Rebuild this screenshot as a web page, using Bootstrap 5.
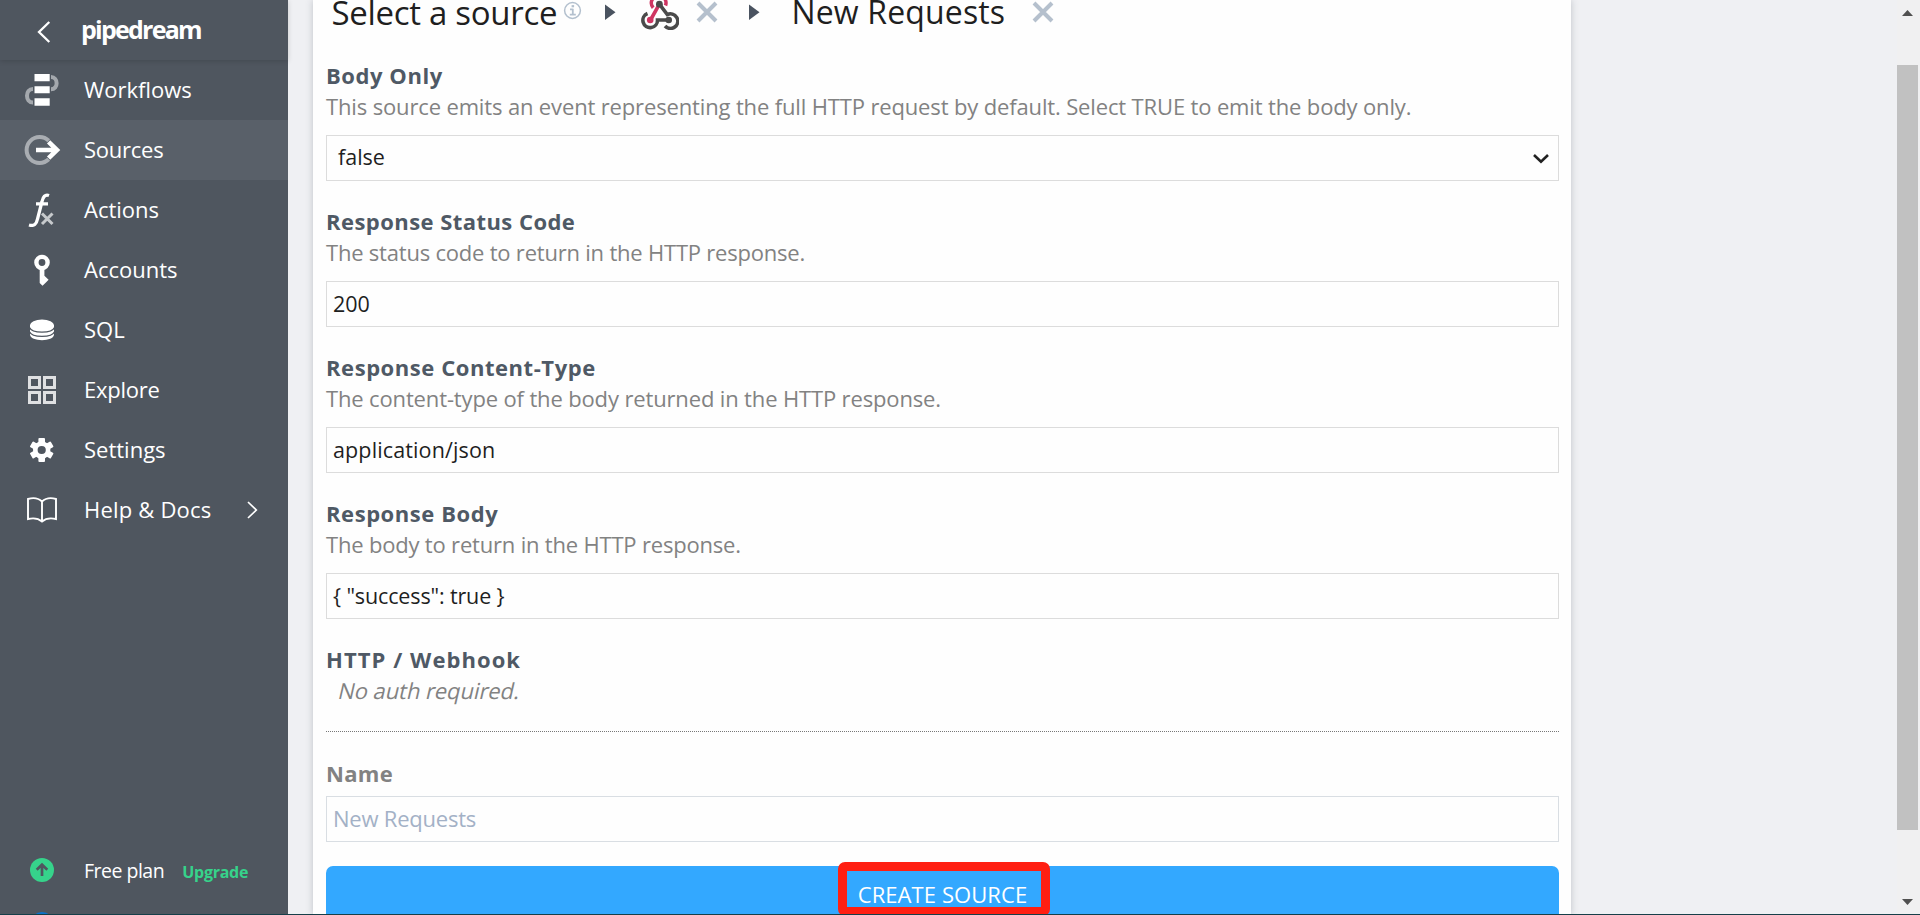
<!DOCTYPE html>
<html lang="en">
<head>
<meta charset="utf-8">
<title>Pipedream - Sources</title>
<link rel="stylesheet" href="https://cdn.jsdelivr.net/npm/bootstrap@5.3.0/dist/css/bootstrap.min.css">
<style>
body{font-family:"Open Sans","Noto Sans",sans-serif;font-size:22px;background:#eff0f3;height:915px;overflow:hidden;color:#212121}
.app{height:915px}
.side{width:288px;background:#4f565f;color:#fff}
.side-head{height:60px;box-shadow:0 1px 5px rgba(0,0,0,.16)}
.brand{font-size:25px;font-weight:700;letter-spacing:-1.75px;line-height:36px;margin-left:30px;margin-top:-2px}
.side .nav-link{height:60px;color:#fff;padding:0;line-height:30px}
.side .nav-link.active{background:#596069}
.ico{width:84px;padding-left:24px;flex:none}
.ico svg,.crumbs svg{display:block}
.nav-link span{margin-top:-2px}
.tight{letter-spacing:-.25px}
.plan{height:60px;font-size:19.5px;letter-spacing:-.5px;padding-top:2px}
.upg{font-size:16px;font-weight:700;letter-spacing:-.25px;color:#36d38b;margin-left:18px}
.panel{width:1258px;margin-left:25px;background:#fefefe;box-shadow:0 0 7px rgba(60,70,80,.27);padding:0 12px 0 13px}
.crumbs{height:60px;color:#1f1f1f}
.crumbs div{white-space:nowrap}
.t1{font-size:33px;line-height:26px;letter-spacing:-.3px;margin-left:5.5px;width:231px}
.t2{font-size:32px;line-height:23px;letter-spacing:.15px;margin-left:32px;width:240px}
.lab{font-weight:700;line-height:31px;letter-spacing:.56px;color:#4f5965}
.help{line-height:31px;letter-spacing:-.145px;color:#828282;white-space:nowrap}
.slant{display:inline-block;transform:skewX(-13deg);letter-spacing:-.08px;margin-left:13px}
.field{margin-bottom:25px}
.field .form-control,.field .form-select{margin-top:13px}
.form-control,.form-select{height:46px;border:1px solid #dcdcdc;border-radius:0;font-size:21.5px;padding:0 6px 1px;color:#1f1f1f;background-color:#fefefe}
.form-select{padding-left:11px;background-image:none}
.form-control::placeholder{color:#a3b1c6;opacity:1}
.dots{height:1px;margin-top:25px;background:repeating-linear-gradient(90deg,#777 0 1px,#fefefe 1px 2px)}
.action{margin-top:24px}
.create{display:block;height:49px;background:#33a8ff;border:0;border-radius:7px 7px 0 0;color:#fff;font-size:22px;line-height:30px;padding:6px 0 0;letter-spacing:.08px}
.create:hover{background:#33a8ff;color:#fff}
.ring{left:512px;top:-4px;width:212px;height:54px;border:9px solid #ff1f12;border-radius:7px}
.scroll{width:23px;background:#f0f0f1}
.thumb{width:21px;height:765px;background:#c1c1c1}
.edge{height:1px;background:#163f49}
</style>
<script src="https://cdn.jsdelivr.net/npm/bootstrap@5.3.0/dist/js/bootstrap.bundle.min.js"></script>
</head>
<body>
<div class="app d-flex position-relative overflow-hidden">
  <aside class="side d-flex flex-column flex-shrink-0">
    <div class="side-head d-flex align-items-center">
      <svg width="14" height="22" viewBox="0 0 14 22" style="margin-left:37px;margin-top:4px" fill="none" stroke="#fff" stroke-width="2.3"><path d="M12.3 1L2 11l10.300 10"/></svg>
      <div class="brand">pipedream</div>
    </div>
    <nav class="nav flex-column flex-nowrap">
      <a class="nav-link d-flex align-items-center"><div class="ico"><svg width="36" height="34" viewBox="0 0 36 34"><path d="M27 3c7.500 0 7.500 12.300 0 12.300M9 15c-8 0-8 13.500 0 13.500" transform="translate(0 1)" fill="none" stroke="#a4a8ad" stroke-width="4"/><path fill="#fff" d="M10.500 1h15.200v7.300H10.500zM10.500 13.200h15.200v7H10.500zM10.500 25.200h15.200v7.600H10.500z"/></svg></div><span>Workflows</span></a>
      <a class="nav-link active d-flex align-items-center"><div class="ico"><svg width="37" height="30" viewBox="0 0 37 30"><path d="M24.700 5.700A13 13 0 1 0 24.700 24.300" fill="none" stroke="#a9adb2" stroke-width="4"/><path d="M12 15h20M24.600 6.800l8.400 8.200l-8.400 8.200" fill="none" stroke="#fff" stroke-width="4.600"/></svg></div><span class="tight">Sources</span></a>
      <a class="nav-link d-flex align-items-center"><div class="ico"><svg width="34" height="34" viewBox="0 0 34 34" fill="none"><path d="M25 2.500c-4-1.500-6 1.500-7 6L13.500 26c-1 5-3.500 7.500-8.500 6M12 10.800h12" stroke="#fff" stroke-width="3.300"/><path d="M18 20.500l10.500 10.500M28.500 20.500L18 31" stroke="#c6c9cc" stroke-width="3"/></svg></div><span>Actions</span></a>
      <a class="nav-link d-flex align-items-center"><div class="ico"><svg width="36" height="32" viewBox="0 0 36 32"><circle cx="18" cy="8.500" r="5.600" fill="none" stroke="#fff" stroke-width="4.400"/><path fill="#fff" d="M15.700 14h4.700v7.800l4.200 4-3.200 3.200-2.900 2.700-2.800-2.700z"/></svg></div><span>Accounts</span></a>
      <a class="nav-link d-flex align-items-center"><div class="ico"><svg width="36" height="24" viewBox="0 0 36 24"><path fill="#fff" d="M6 7v9.500c0 7.500 24 7.500 24 0V7z"/><ellipse cx="18" cy="7.600" rx="12" ry="6.200" fill="#fff"/><path d="M5.500 9.500c2.500 6.200 22.500 6.200 25 0M5.500 13.800c2.500 6.200 22.500 6.200 25 0" fill="none" stroke="#4f565f" stroke-width="1.200"/></svg></div><span>SQL</span></a>
      <a class="nav-link d-flex align-items-center"><div class="ico"><svg width="36" height="28" viewBox="0 0 36 28"><g fill="none" stroke="#dfe0e2" stroke-width="3"><path d="M5.500 1.500h10v10h-10zM20.500 1.500h10v10h-10zM5.500 16.500h10v10h-10zM20.500 16.500h10v10h-10z"/></g></svg></div><span class="tight">Explore</span></a>
      <a class="nav-link d-flex align-items-center"><div class="ico"><svg width="36" height="24" viewBox="0 0 36 24"><g transform="translate(17.700 12)"><g fill="#fff"><rect id="tooth" x="-3.300" y="-12" width="6.600" height="24" rx="1"/><use href="#tooth" transform="rotate(60)"/><use href="#tooth" transform="rotate(120)"/></g><circle r="6.400" fill="none" stroke="#fff" stroke-width="4.600"/><circle r="4.100" fill="#4f565f"/></g></svg></div><span>Settings</span></a>
      <a class="nav-link d-flex align-items-center"><div class="ico"><svg width="36" height="26" viewBox="0 0 36 26" fill="none" stroke="#fff" stroke-width="1.900"><path d="M18 4.500C14 .800 9 .500 4 2v20c5-1.200 10-1 14 2.500c4-3.500 9-3.700 14-2.500V2C27 .500 22 .800 18 4.500v20"/></svg></div><span style="letter-spacing:.2px">Help &amp; Docs</span><svg width="11" height="18" viewBox="0 0 11 18" style="margin-left:36px" fill="none" stroke="#fff" stroke-width="1.700"><path d="M1 1l8.300 8L1 17"/></svg></a>
    </nav>
    <div class="plan d-flex align-items-center mt-auto">
      <div class="ico"><svg width="36" height="24" viewBox="0 0 36 24" style="margin-top:-2px"><circle cx="18" cy="12" r="12" fill="#36d38b"/><path d="M18 18V8M12.700 11.700L18 6.700l5.300 5" fill="none" stroke="#4f565f" stroke-width="2.700"/></svg></div>
      <div class="d-flex align-items-baseline"><span>Free plan</span><span class="upg">Upgrade</span></div>
    </div>
    <div class="ico overflow-hidden" style="height:15px;padding-top:11.500px"><svg width="36" height="24" viewBox="0 0 36 24"><circle cx="18" cy="12" r="12" fill="#0d73c9"/></svg></div>
  </aside>

  <main class="panel flex-shrink-0">
    <div class="crumbs d-flex align-items-start">
      <div class="t1">Select a source</div>
      <svg width="19" height="19" viewBox="0 0 19 19" style="margin-top:1px" fill="none" stroke="#b3c0ce"><circle cx="9.500" cy="9.500" r="7.900" stroke-width="1.500"/><path d="M9.800 7.700v6M7 8.300h2.800M6.800 13.700h6" stroke-width="1.800"/><path d="M8.600 5.200h2.500" stroke-width="2.200"/></svg>
      <svg width="11" height="17" viewBox="0 0 11 17" style="margin:4px 0 0 23px"><path fill="#4a5360" d="M0 .500L10.500 8.300 0 16z"/></svg>
      <svg width="38" height="32" viewBox="0 0 38 32" style="margin:-2px 0 0 25px" fill="none" stroke-width="3.600"><path d="M12.200 9.800A7.300 7.300 0 1 1 24.500 7.500M18.400 6.200L9.500 22" stroke="#cf3562"/><path d="M18.400 6.200L26.300 16.500A7.300 7.300 0 1 1 24 28M27.500 22H16.500A7.300 7.300 0 1 1 6.500 15.500" stroke="#4a4a4a"/><circle cx="18.400" cy="6.200" r="3.400" fill="#4a4a4a"/><circle cx="27.700" cy="22" r="3.300" fill="#4a4a4a"/><circle cx="9.200" cy="22" r="3.300" fill="#cf3562"/></svg>
      <svg width="22" height="22" viewBox="0 0 22 22" style="margin:1px 0 0 17px" stroke="#b5c0cd" stroke-width="4"><path d="M2 2l18 18M20 2L2 20"/></svg>
      <svg width="11" height="17" viewBox="0 0 11 17" style="margin:4px 0 0 31px"><path fill="#4a5360" d="M0 .500L10.500 8.300 0 16z"/></svg>
      <div class="t2">New Requests</div>
      <svg width="22" height="22" viewBox="0 0 22 22" style="margin:1px 0 0 0" stroke="#b5c0cd" stroke-width="4"><path d="M2 2l18 18M20 2L2 20"/></svg>
    </div>

    <div class="field">
      <div class="lab">Body Only</div>
      <div class="help">This source emits an event representing the full HTTP request by default. Select TRUE to emit the body only.</div>
      <div class="form-select d-flex align-items-center justify-content-between">false<svg width="16" height="10" viewBox="0 0 16 10" style="margin:2px 3px 0 0" fill="none" stroke="#212121" stroke-width="2.600"><path d="M1 1l7 6.700L15 1"/></svg></div>
    </div>
    <div class="field">
      <div class="lab" style="letter-spacing:.450px">Response Status Code</div>
      <div class="help" style="letter-spacing:-.210px">The status code to return in the HTTP response.</div>
      <input class="form-control" value="200">
    </div>
    <div class="field">
      <div class="lab">Response Content-Type</div>
      <div class="help">The content-type of the body returned in the HTTP response.</div>
      <input class="form-control" value="application/json" style="letter-spacing:.13px">
    </div>
    <div class="field">
      <div class="lab">Response Body</div>
      <div class="help" style="letter-spacing:-.190px">The body to return in the HTTP response.</div>
      <input class="form-control" value='{ "success": true }' style="letter-spacing:-.130px">
    </div>
    <div class="lab" style="letter-spacing:1.060px">HTTP / Webhook</div>
    <div class="help"><span class="slant">No auth required.</span></div>
    <div class="dots"></div>
    <div class="lab" style="margin:26px 0 7px;color:#828282;letter-spacing:.300px">Name</div>
    <input class="form-control" placeholder="New Requests" style="font-size:22px;letter-spacing:-.220px;border-color:#d9dee3;padding-bottom:3px">
    <div class="action position-relative">
      <button class="btn create w-100">CREATE SOURCE</button>
      <div class="ring position-absolute"></div>
    </div>
  </main>

  <div class="scroll ms-auto d-flex flex-column">
    <svg width="23" height="65" viewBox="0 0 23 65"><path fill="#505050" d="M5 16l5.500-6 5.500 6z"/></svg>
    <div class="thumb"></div>
    <svg width="23" height="85" viewBox="0 0 23 85"><path fill="#505050" d="M5 69l5.500 6 5.500-6z"/></svg>
  </div>
  <div class="edge position-absolute bottom-0 start-0 w-100"></div>
</div>
</body>
</html>
